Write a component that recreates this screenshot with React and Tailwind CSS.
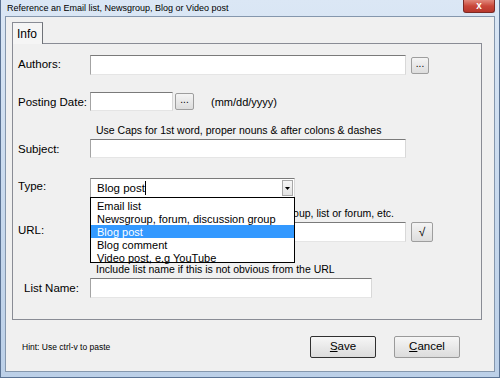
const inputCls =
  "bg-white border border-t-[#7a7a7a] border-l-[#a3a3a3] border-r-[#d8d8d8] border-b-[#e5e5e5]";
const btnCls =
  "flex items-center justify-center bg-gradient-to-b from-[#f4f4f4] to-[#dddddd] border border-[#9e9e9e] rounded-[2px] text-black";

function Label({ children, className = "" }) {
  return (
    <div className={"w-[72px] shrink-0 whitespace-nowrap text-[11.5px] leading-[14px] " + className}>{children}</div>
  );
}

export default function App() {
  return (
    <div className="w-[500px] h-[378px] overflow-hidden flex flex-col bg-gradient-to-b from-[#dbe7f5] via-[#c9daee] to-[#bcd0e8] border-l border-r border-b border-[#5b7394] font-['Liberation_Sans',Arial,sans-serif] text-black px-[4px] pb-[5px]">
      {/* title bar */}
      <div className="h-[16px] shrink-0 flex items-start justify-between">
        <div className="pl-[2px] pt-[3px] text-[9px] leading-[11px] text-black whitespace-nowrap">
          Reference an Email list, Newsgroup, Blog or Video post
        </div>
        <div className="w-[32px] h-[13px] rounded-b-[3px] bg-gradient-to-b from-[#e0877b] via-[#c9473a] to-[#b8382d] border border-t-0 border-[#7b2a25] flex items-center justify-center text-white text-[10px] font-bold leading-none">
          x
        </div>
      </div>
      {/* client */}
      <div className="flex-1 bg-[#f0f0f0] border border-[#8597ad] flex flex-col">
        <div className="pl-[6px] pt-[5px]">
          {/* tab strip */}
          <div className="h-[22px] flex">
            <div className="relative z-10 w-[31px] h-[22px] bg-[#f5f5f5] border border-b-0 border-[#898c95] border-r-[#6f7278] pl-[4px] pt-[4px] text-[12px] leading-[14px]">
              Info
            </div>
          </div>
          {/* panel */}
          <div className="-mt-px w-[470px] h-[277px] border border-[#898c95] bg-[#f0f0f0] pl-[5px] flex flex-col text-[10.5px]">
            {/* Authors */}
            <div className="mt-[11px] h-[20px] flex items-center">
              <Label className="-mt-[3px]">Authors:</Label>
              <div className={inputCls + " w-[316px] h-[20px]"} />
              <div className={btnCls + " ml-[5px] w-[18px] h-[17px] text-[10px] leading-none pb-[3px]"}>...</div>
            </div>
            {/* Posting date */}
            <div className="mt-[17px] h-[19px] flex items-center">
              <Label>Posting Date:</Label>
              <div className={inputCls + " w-[83px] h-[19px]"} />
              <div className={btnCls + " ml-[2px] w-[19px] h-[17px] text-[10px] leading-none pb-[3px]"}>...</div>
              <div className="ml-[17px] leading-[14px] text-[11px]">(mm/dd/yyyy)</div>
            </div>
            {/* caps note */}
            <div className="mt-[12px] h-[14px] pl-[78px] leading-[14px] whitespace-nowrap">
              Use Caps for 1st word, proper nouns &amp; after colons &amp; dashes
            </div>
            {/* Subject */}
            <div className="mt-[2px] h-[19px] flex items-center">
              <Label>Subject:</Label>
              <div className={inputCls + " w-[316px] h-[19px]"} />
            </div>
            {/* Type */}
            <div className="mt-[20px] h-[20px] flex items-center">
              <Label className="-mt-[5px]">Type:</Label>
              <div className={inputCls + " relative w-[205px] h-[20px] flex items-center text-[11.5px]"}>
                <span className="pl-[6px] leading-[14px]">Blog post</span>
                <span className="w-px h-[14px] bg-black" />
                <div className="absolute right-[1px] top-[1px] w-[11px] h-[16px] bg-gradient-to-b from-[#f6f6f6] to-[#e3e3e3] border border-[#a8a8a8] flex items-center justify-center">
                  <svg width="5" height="3" viewBox="0 0 5 3">
                    <path d="M0 0H5L2.5 3Z" fill="#000" />
                  </svg>
                </div>
                {/* dropdown list */}
                <div className="absolute -left-px top-[18px] w-[205px] h-[66px] bg-white border border-black z-20 flex flex-col pt-[1px] text-[11px]">
                  <div className="h-[13px] leading-[14px] pl-[6px]">Email list</div>
                  <div className="h-[13px] leading-[14px] pl-[6px] whitespace-nowrap">Newsgroup, forum, discussion group</div>
                  <div className="h-[13px] leading-[14px] pl-[6px] bg-[#3399ff] text-white">Blog post</div>
                  <div className="h-[13px] leading-[14px] pl-[6px]">Blog comment</div>
                  <div className="h-[13px] leading-[14px] pl-[6px]">Video post, e.g YouTube</div>
                </div>
              </div>
            </div>
            {/* note partly under the dropdown */}
            <div className="mt-[8px] h-[14px] flex">
              <div className="ml-[72px] w-[304px] whitespace-nowrap leading-[14px] flex justify-end">
                <span>Paste the URL of the blog, newsgroup, list or forum, etc.</span>
              </div>
            </div>
            {/* URL */}
            <div className="mt-[2px] h-[20px] flex items-center">
              <Label className="-mt-[5px]">URL:</Label>
              <div className={inputCls + " w-[316px] h-[20px]"} />
              <div className={btnCls + " ml-[5px] w-[22px] h-[20px] text-[12px] leading-none"}>√</div>
            </div>
            {/* Include note */}
            <div className="mt-[20px] h-[14px] pl-[78px] leading-[14px] whitespace-nowrap">
              Include list name if this is not obvious from the URL
            </div>
            {/* List name */}
            <div className="mt-[2px] h-[20px] flex items-center">
              <Label className="pl-[6px] -mt-[1px]">List Name:</Label>
              <div className={inputCls + " w-[282px] h-[20px]"} />
            </div>
          </div>
        </div>
        {/* bottom */}
        <div className="mt-[16px] h-[22px] flex items-center">
          <div className="pl-[16px] text-[8.5px] leading-[10px] whitespace-nowrap">Hint: Use ctrl-v to paste</div>
          <div className="ml-auto mr-[34px] flex gap-[18px]">
            <div className="w-[66px] h-[22px] border border-[#303030] rounded-[2px] bg-gradient-to-b from-[#f6f6f6] to-[#dcdcdc] flex items-center justify-center text-[11.5px]">
              <span><span className="underline">S</span>ave</span>
            </div>
            <div className="w-[66px] h-[22px] border border-[#9a9a9a] rounded-[2px] bg-gradient-to-b from-[#f6f6f6] to-[#dcdcdc] flex items-center justify-center text-[11.5px]">
              <span><span className="underline">C</span>ancel</span>
            </div>
          </div>
        </div>
      </div>
    </div>
  );
}
